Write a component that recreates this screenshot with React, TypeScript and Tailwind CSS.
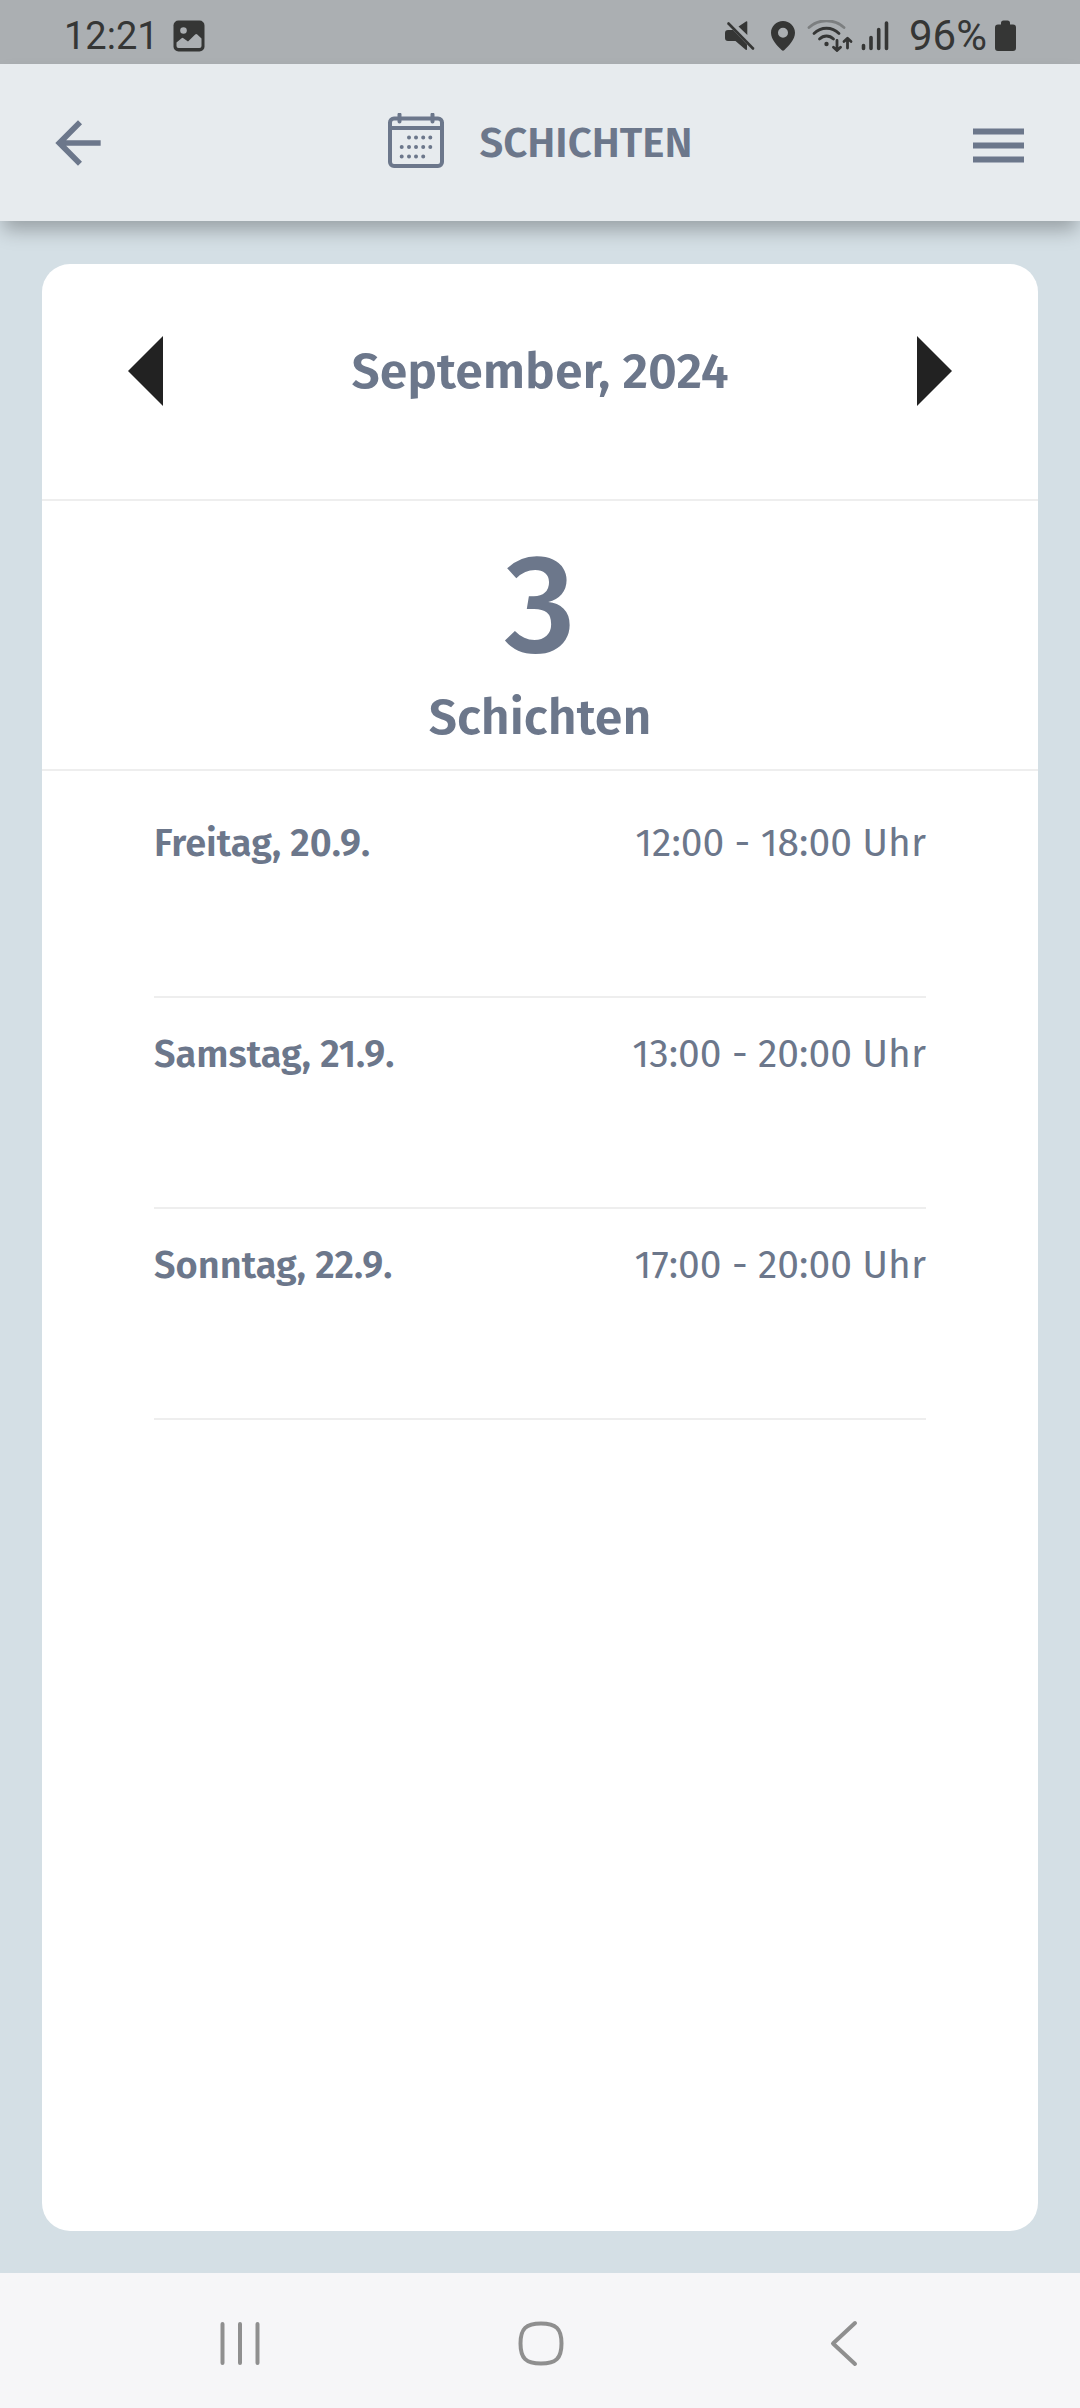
const shifts = [
  { day: 'Freitag, 20.9.', time: '12:00 - 18:00 Uhr' },
  { day: 'Samstag, 21.9.', time: '13:00 - 20:00 Uhr' },
  { day: 'Sonntag, 22.9.', time: '17:00 - 20:00 Uhr' },
]

function StatusBar() {
  return (
    <div className="flex h-16 items-center justify-between bg-[#abafb2] pt-2 pr-16 pl-16 font-['Roboto',sans-serif] leading-[48px] text-[#353635]">
      <div className="flex items-center gap-[14px]">
        <span className="text-[38px]">12:21</span>
        <svg className="h-8 w-8" viewBox="0 0 32 32" fill="none">
          <rect x="0.5" y="0.5" width="31" height="31" rx="5" fill="currentColor" />
          <circle cx="10.5" cy="10.5" r="3.3" fill="#abafb2" />
          <path
            d="M3.5 22.5 8.6 18.2a1.4 1.4 0 0 1 1.8 0L15 21.6 22.2 14.4a1.5 1.5 0 0 1 2.1 0L28.5 18.6V26a2 2 0 0 1-2 2H5.5a2 2 0 0 1-2-2z"
            fill="#abafb2"
          />
        </svg>
      </div>

      <div className="flex items-center">
        {/* muted */}
        <svg className="mr-4 h-8 w-[30px]" viewBox="0 0 30 32">
          <path
            d="M0 13a3 3 0 0 1 3-3h5l14 14.5V29q0 1.5-1.3.7L10.5 21H3a3 3 0 0 1-3-3zM21 1.5q1.3-.9 1.3.6V15L13.5 6.6z"
            fill="currentColor"
          />
          <path d="M3.5 3.5 28 28.5" stroke="currentColor" strokeWidth="2.6" strokeLinecap="round" />
        </svg>
        {/* location */}
        <svg className="mr-3 h-8 w-6" viewBox="0 0 24 32">
          <path
            fillRule="evenodd"
            d="M12 1C5.4 1 0 6.2 0 12.7c0 7 6.2 12.6 10.6 17.4a1.9 1.9 0 0 0 2.8 0C17.8 25.3 24 19.7 24 12.7 24 6.2 18.6 1 12 1zm0 6.8a5 5 0 1 1 0 10 5 5 0 0 1 0-10z"
            fill="currentColor"
          />
        </svg>
        {/* wifi with traffic arrows */}
        <svg className="mr-2 h-8 w-[46px]" viewBox="0 0 46 32" fill="none" stroke="currentColor" strokeWidth="2.8" strokeLinecap="round" strokeLinejoin="round">
          <path d="M2 7.5C12-1.5 27-1.5 37 7.5" stroke="#7c7f80" />
          <path d="M7 13.5c7-7 18-7 25 0" />
          <path d="M12.5 19c4-4 10-4 14 0" />
          <circle cx="19.5" cy="24" r="2.2" fill="currentColor" stroke="none" />
          <path d="M30 20.5v10M26.5 27.3l3.500 3.300 3.500-3.300" />
          <path d="M40.500 28v-9.500M37 21.500l3.500-3.300 3.500 3.300" />
        </svg>
        {/* signal */}
        <svg className="mr-5 h-8 w-7" viewBox="0 0 28 32" stroke="currentColor" strokeWidth="3.6" strokeLinecap="round">
          <path d="M2.5 25.5v3M10 17.5v11M17.7 9.5v19M25.5 3v25.5" />
        </svg>
        <span className="text-[42px]">96%</span>
        <svg className="ml-2 h-8 w-[21px]" viewBox="0 0 21 32">
          <path
            d="M6 3a2.5 2.5 0 0 1 2.5-2.5h4A2.5 2.5 0 0 1 15 3v1.5h3a3 3 0 0 1 3 3V28a3 3 0 0 1-3 3H3a3 3 0 0 1-3-3V7.5a3 3 0 0 1 3-3h3z"
            fill="currentColor"
          />
        </svg>
      </div>
    </div>
  )
}

function Header() {
  return (
    <header className="relative flex h-[157px] items-center justify-between bg-[#e7ebee] px-11 shadow-[0_12px_18px_-3px_rgba(0,0,0,0.28)]">
      <button aria-label="Zurück">
        <svg className="h-[68px] w-[68px]" viewBox="0 0 24 24" fill="currentColor">
          <path d="M20 11H7.83l5.59-5.59L12 4l-8 8 8 8 1.41-1.41L7.83 13H20v-2z" />
        </svg>
      </button>

      <div className="flex items-center gap-9">
        <svg className="h-[60px] w-14" viewBox="0 0 56 60" fill="none" stroke="currentColor" strokeWidth="4" strokeLinecap="round">
          <rect x="2" y="5.5" width="52" height="47.5" rx="4" />
          <path d="M2 15h52M11.5 1.5v7M44.5 1.5v7" />
          <path d="M21 24.5h.01M28 24.5h.01M35.2 24.5h.01M42.3 24.5h.01M13.7 34h.01M21 34h.01M28 34h.01M35.2 34h.01M42.3 34h.01M13.7 43.5h.01M21 43.5h.01M28 43.5h.01M35.2 43.5h.01" />
        </svg>
        <h1 className="text-[42px] leading-[56px] font-semibold">SCHICHTEN</h1>
      </div>

      <button aria-label="Menü">
        <svg className="h-[68px] w-[68px]" viewBox="0 0 68 68" fill="currentColor">
          <path d="M5 19.5h51v6H5zM5 33.5h51v6H5zM5 47.5h51v6H5z" />
        </svg>
      </button>
    </header>
  )
}

function NavigationBar() {
  return (
    <nav className="grid h-[135px] grid-cols-3 items-center bg-[#f6f6f8] px-[90px] pt-1 text-[#8f8f8f]">
      <button className="flex justify-center" aria-label="Letzte Apps">
        <svg className="h-12 w-12" viewBox="0 0 48 48" stroke="currentColor" strokeWidth="4" strokeLinecap="round">
          <path d="M6.5 5v39M24 5v39M41.5 5v39" />
        </svg>
      </button>
      <button className="flex justify-center" aria-label="Startseite">
        <svg className="h-12 w-12" viewBox="0 0 48 48" fill="none" stroke="currentColor" strokeWidth="4">
          <path d="M25 4.5c15 0 20.5 5 20.5 20s-5.5 20-20.5 20S4.5 39.5 4.5 24.5s5.5-20 20.5-20z" />
        </svg>
      </button>
      <button className="flex justify-center" aria-label="Zurück">
        <svg className="h-12 w-12" viewBox="0 0 48 48" fill="none" stroke="currentColor" strokeWidth="4" strokeLinecap="round" strokeLinejoin="round">
          <path d="M39 4 17 24.5 39 45" />
        </svg>
      </button>
    </nav>
  )
}

export default function App() {
  return (
    <div className="flex min-h-screen flex-col bg-[#d4dfe5] font-['Fira_Sans','Noto_Sans',sans-serif] text-[#6c778b]">
      <StatusBar />
      <Header />

      <main className="flex flex-1 flex-col px-[42px] pt-[43px] pb-[42px]">
        <div className="flex-1 rounded-[28px] bg-white">
          {/* month switcher */}
          <div className="flex items-center justify-between border-b-2 border-[#eeeeee] px-[86px] pt-[72px] pb-[93px]">
            <button aria-label="Voriger Monat" className="text-[#222222]">
              <svg className="h-[70px] w-[35px]" viewBox="0 0 35 70" fill="currentColor">
                <path d="M35 0v70L0 35z" />
              </svg>
            </button>
            <h2 className="text-[50px] leading-[68px] font-semibold">September, 2024</h2>
            <button aria-label="Nächster Monat" className="text-[#222222]">
              <svg className="h-[70px] w-[35px]" viewBox="0 0 35 70" fill="currentColor">
                <path d="M0 0v70l35-35z" />
              </svg>
            </button>
          </div>

          {/* total */}
          <div className="flex flex-col items-center border-b-2 border-[#eeeeee] pt-[26px] pb-[18px]">
            <p className="text-[140px] leading-[156px] font-medium">3</p>
            <p className="text-[50px] leading-[68px] font-semibold">Schichten</p>
          </div>

          <ul className="px-28 pt-4">
            {shifts.map((shift) => (
              <li
                key={shift.day}
                className="flex justify-between border-b-2 border-[#eeeeee] pt-8 pb-[129px] leading-[48px]"
              >
                <span className="text-[38px] font-semibold">{shift.day}</span>
                <span className="text-[39px]">{shift.time}</span>
              </li>
            ))}
          </ul>
        </div>
      </main>

      <NavigationBar />
    </div>
  )
}
